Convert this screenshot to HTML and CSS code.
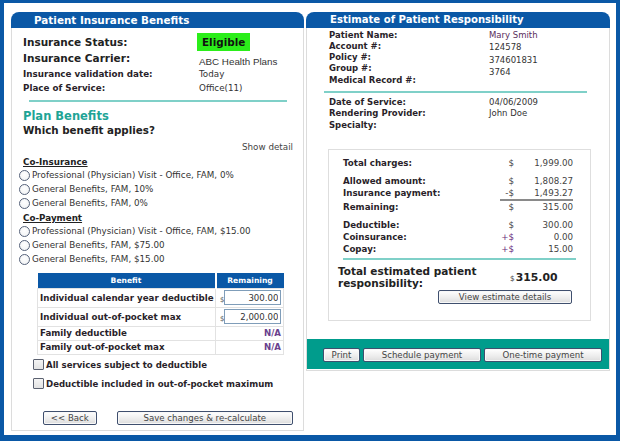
FILE: index.html
```html
<!DOCTYPE html>
<html>
<head>
<meta charset="utf-8">
<title>Patient Insurance Benefits</title>
<link rel="stylesheet" href="styles.css">
</head>
<body>
<div class="frame">
  <section class="panel panel-left">
    <div class="panel-head">Patient Insurance Benefits</div>
    <div class="panel-body left-body">
      <div class="info-row row-status"><span class="big-label">Insurance Status:</span><span class="eligible">Eligible</span></div>
      <div class="info-row row-carrier"><span class="big-label">Insurance Carrier:</span><span class="carrier">ABC Health Plans</span></div>
      <div class="info-row row-small"><span class="small-label">Insurance validation date:</span><span class="small-val">Today</span></div>
      <div class="info-row row-small"><span class="small-label">Place of Service:</span><span class="small-val">Office(11)</span></div>
      <div class="teal-rule left-rule"></div>
      <h2 class="plan-title">Plan Benefits</h2>
      <div class="which">Which benefit applies?</div>
      <div class="show-detail">Show detail</div>
      <div class="group-title">Co-Insurance</div>
      <label class="opt"><input type="radio" name="benefit" class="radio"><span>Professional (Physician) Visit - Office, FAM, 0%</span></label>
      <label class="opt"><input type="radio" name="benefit" class="radio"><span>General Benefits, FAM, 10%</span></label>
      <label class="opt"><input type="radio" name="benefit" class="radio"><span>General Benefits, FAM, 0%</span></label>
      <div class="group-title group-gap">Co-Payment</div>
      <label class="opt"><input type="radio" name="benefit" class="radio"><span>Professional (Physician) Visit - Office, FAM, $15.00</span></label>
      <label class="opt"><input type="radio" name="benefit" class="radio"><span>General Benefits, FAM, $75.00</span></label>
      <label class="opt"><input type="radio" name="benefit" class="radio"><span>General Benefits, FAM, $15.00</span></label>
      <table class="benefit-table">
        <thead>
          <tr><th class="col-benefit">Benefit</th><th class="col-remaining">Remaining</th></tr>
        </thead>
        <tbody>
          <tr class="tall-row"><td class="b-name">Individual calendar year deductible</td><td class="b-val"><span class="dollar">$</span><input class="amount-input" type="text" value="300.00"></td></tr>
          <tr class="tall-row"><td class="b-name">Individual out-of-pocket max</td><td class="b-val"><span class="dollar">$</span><input class="amount-input" type="text" value="2,000.00"></td></tr>
          <tr class="short-row"><td class="b-name">Family deductible</td><td class="b-na">N/A</td></tr>
          <tr class="short-row"><td class="b-name">Family out-of-pocket max</td><td class="b-na">N/A</td></tr>
        </tbody>
      </table>
      <label class="check check-first"><input type="checkbox" class="cb"><span>All services subject to deductible</span></label>
      <label class="check check-second"><input type="checkbox" class="cb"><span>Deductible included in out-of-pocket maximum</span></label>
      <div class="left-actions">
        <button class="btn btn-back">&lt;&lt; Back</button>
        <button class="btn btn-save">Save changes &amp; re-calculate</button>
      </div>
    </div>
  </section>

  <section class="panel panel-right">
    <div class="panel-head head-right">Estimate of Patient Responsibility</div>
    <div class="panel-body right-body">
      <div class="pair pair-top">
        <div class="pair-labels">
          <div>Patient Name:</div>
          <div>Account #:</div>
          <div>Policy #:</div>
          <div>Group #:</div>
          <div>Medical Record #:</div>
        </div>
        <div class="pair-values">
          <div class="name-val">Mary Smith</div>
          <div>124578</div>
          <div>374601831</div>
          <div>3764</div>
        </div>
      </div>
      <div class="teal-rule right-rule"></div>
      <div class="pair pair-service">
        <div class="pair-labels">
          <div>Date of Service:</div>
          <div>Rendering Provider:</div>
          <div>Specialty:</div>
        </div>
        <div class="pair-values">
          <div>04/06/2009</div>
          <div>John Doe</div>
        </div>
      </div>

      <div class="summary">
        <div class="sum-grid">
          <div class="s-label">Total charges:</div><div class="s-sign">$</div><div class="s-amt">1,999.00</div>
        </div>
        <div class="sum-grid sum-gap">
          <div class="s-label">Allowed amount:</div><div class="s-sign">$</div><div class="s-amt">1,808.27</div>
          <div class="s-label">Insurance payment:</div><div class="s-sign underline">-$</div><div class="s-amt underline">1,493.27</div>
          <div class="s-label">Remaining:</div><div class="s-sign">$</div><div class="s-amt">315.00</div>
        </div>
        <div class="sum-grid sum-gap">
          <div class="s-label">Deductible:</div><div class="s-sign">$</div><div class="s-amt">300.00</div>
          <div class="s-label">Coinsurance:</div><div class="s-sign plus">+$</div><div class="s-amt">0.00</div>
          <div class="s-label">Copay:</div><div class="s-sign plus">+$</div><div class="s-amt">15.00</div>
        </div>
        <div class="teal-rule sum-rule"></div>
        <div class="total-row">
          <div class="total-label">Total estimated patient<br>responsibility:</div>
          <div class="total-val"><span class="total-dollar">$</span>315.00</div>
        </div>
        <div class="view-row"><button class="btn btn-view">View estimate details</button></div>
      </div>

      <div class="footer-bar">
        <button class="btn btn-print">Print</button>
        <button class="btn btn-pay">Schedule payment</button>
        <button class="btn btn-pay">One-time payment</button>
      </div>
    </div>
  </section>
</div>
</body>
</html>
```

FILE: styles.css
```css
* { box-sizing: border-box; }
html, body { margin: 0; padding: 0; background: #ffffff; }
body {
  width: 620px;
  height: 441px;
  font-family: "DejaVu Sans", Verdana, sans-serif;
  font-size: 8.75px;
  color: #333;
}
.frame {
  width: 620px;
  height: 441px;
  border-style: solid;
  border-color: #0a58a6;
  border-width: 3px 4px 6px 4px;
  padding: 9px 0 0 7px;
  display: flex;
  align-items: flex-start;
  gap: 2px;
  background: #fff;
}
.panel { display: flex; flex-direction: column; }
.panel-left { width: 293px; height: 419px; }
.panel-right { width: 304px; height: 359px; }
.panel-head {
  height: 16px;
  background: #0a58a6;
  color: #fff;
  font-weight: bold;
  font-size: 10.4px;
  line-height: 16px;
  padding-left: 23px;
  border-radius: 8px 8px 0 0;
  white-space: nowrap;
}
.head-right { padding-left: 24px; font-size: 10.1px; }
.panel-body {
  flex: 1;
  border: 1px solid #dcdcdc;
  border-top: none;
  display: flex;
  flex-direction: column;
}

/* Left panel */
.left-body { padding: 5px 10px 0 11px; }
.info-row { display: flex; white-space: nowrap; }
.info-row > :first-child { width: 174px; flex: none; }
.big-label { font-size: 10.5px; font-weight: bold; color: #222; line-height: 14px; }
.small-label { font-size: 8.75px; font-weight: bold; color: #2a1f2a; line-height: 14px; }
.small-val { font-size: 8.75px; color: #333; line-height: 14px; padding-left: 2px; }
.row-status { height: 18px; align-items: center; }
.eligible {
  background: #2bee1a;
  font-size: 10.4px;
  font-weight: bold;
  color: #111;
  height: 18px;
  line-height: 18px;
  padding: 0 5px;
}
.row-carrier { height: 16px; align-items: flex-start; }
.carrier {
  font-family: "Liberation Sans", Arial, sans-serif;
  font-size: 9.8px;
  color: #333;
  line-height: 14px;
  margin-top: 4px;
  padding-left: 2px;
}
.row-small { height: 14px; align-items: center; }
.teal-rule { height: 2px; background: #7fd0c8; flex: none; }
.left-rule { margin: 5px 6px 0 6px; }
.plan-title {
  margin: 7px 0 0 0;
  font-size: 11.5px;
  line-height: 14px;
  color: #1ea496;
  font-weight: bold;
}
.which { font-size: 10.3px; font-weight: bold; color: #222; line-height: 14px; }
.show-detail { margin-top: 3px; text-align: right; color: #444; line-height: 14px; }
.group-title {
  margin-top: 2px;
  font-weight: bold;
  text-decoration: underline;
  color: #222;
  line-height: 12px;
}
.opt {
  display: flex;
  align-items: center;
  height: 14px;
  margin-left: -4px;
  white-space: nowrap;
  color: #333;
}
.radio {
  appearance: none;
  -webkit-appearance: none;
  width: 11px;
  height: 11px;
  margin: 0 2px 0 0;
  border: 1px solid #56627a;
  border-radius: 50%;
  background: radial-gradient(circle at 50% 40%, #ffffff 0%, #eef0f2 100%);
  flex: none;
}
.benefit-table {
  margin: 7px 0 0 14px;
  width: 247px;
  border-collapse: collapse;
  table-layout: fixed;
}
.benefit-table th {
  background: #0a58a6;
  color: #fff;
  font-size: 7.6px;
  font-weight: bold;
  height: 15px;
  padding: 0;
  text-align: center;
}
.col-benefit { width: 178px; border-right: 2px solid #fff; }
.benefit-table td { border: 1px solid #e2e2e2; padding: 0; }
.tall-row td { height: 19px; }
.short-row td { height: 14px; }
.b-name { font-weight: bold; color: #2a1f2a; padding-left: 2px !important; white-space: nowrap; font-size: 8.7px; }
.b-val { white-space: nowrap; padding-left: 4px !important; }
.dollar { font-size: 7px; color: #555; vertical-align: -2px; }
.amount-input {
  width: 57px;
  height: 15px;
  border: 1px solid #7f9db9;
  font-family: "DejaVu Sans", Verdana, sans-serif;
  font-size: 8.6px;
  color: #333;
  text-align: right;
  padding: 0 2px;
  margin: 0;
  vertical-align: middle;
  background: #fff;
}
.b-na { text-align: right; color: #6a3f8e; font-weight: bold; padding-right: 2px !important; font-size: 8.6px; }
.check {
  display: flex;
  align-items: center;
  height: 14px;
  margin-left: 10px;
  font-size: 8.6px;
  font-weight: bold;
  color: #2a1f2a;
  white-space: nowrap;
}
.check-first { margin-top: 3px; }
.check-second { margin-top: 5px; }
.cb {
  appearance: none;
  -webkit-appearance: none;
  width: 11px;
  height: 11px;
  margin: 0 2px 0 0;
  border: 1px solid #5b6170;
  border-radius: 1px;
  background: linear-gradient(#f4f4f4, #e2e2e2);
  flex: none;
}
.left-actions { display: flex; gap: 20px; margin: 20px 0 0 20px; }
.btn {
  height: 14px;
  padding: 0;
  font-family: "DejaVu Sans", Verdana, sans-serif;
  font-size: 8.6px;
  line-height: 12px;
  color: #444;
  background: linear-gradient(#ffffff, #ececec 60%, #dcdcdc);
  border: 1px solid #3f4f6e;
  border-radius: 2px;
  box-shadow: inset 0 0 0 1px #f8f8f8;
  white-space: nowrap;
}
.btn-back { width: 55px; }
.btn-save { width: 181px; }

/* Right panel */
.right-body { padding: 1px 0 0 0; }
.pair { display: flex; padding-left: 22px; }
.pair-labels { width: 160px; flex: none; font-weight: bold; color: #2a1f2a; font-size: 8.5px; }
.pair-values { color: #333; font-size: 8.5px; }
.pair-top .pair-labels { line-height: 11.25px; padding-top: 0.5px; }
.pair-top .pair-values { line-height: 12.3px; }
.name-val { color: #5a2e5c; }
.right-rule { margin: 5px 22px 0 17px; }
.pair-service { margin-top: 4px; }
.pair-service .pair-labels, .pair-service .pair-values { line-height: 11.5px; }
.summary {
  margin: 18px 0 0 21px;
  width: 263px;
  border: 1px solid #dedede;
  padding: 7px 0 16px 14px;
}
.sum-grid {
  display: grid;
  grid-template-columns: 157px 15px 58px;
  line-height: 12px;
  font-size: 8.7px;
}
.sum-gap { margin-top: 6px; }
.s-label { font-weight: bold; color: #2a1f2a; }
.s-sign { text-align: right; padding-right: 1px; color: #444; }
.s-amt { text-align: right; color: #444; }
.underline { border-bottom: 2px solid #8a8a8a; }
.plus { color: #6a2e7a; }
.sum-rule { margin: 3px 4px 0 0; width: 233px; }
.total-row { display: flex; align-items: center; margin: 6px 0 0 -5px; }
.total-label { width: 172px; font-size: 10.5px; font-weight: bold; color: #222; line-height: 11.5px; white-space: nowrap; }
.total-val { font-size: 10.8px; font-weight: bold; color: #222; }
.total-dollar { font-size: 7.5px; font-weight: normal; color: #444; margin-right: 1px; }
.view-row { margin: 1px 0 0 95px; }
.btn-view { width: 134px; }
.footer-bar {
  margin-top: 18px;
  height: 30px;
  background: #009c8c;
  display: flex;
  gap: 3px;
  padding: 9px 0 0 16px;
}
.btn-print { width: 37px; }
.btn-pay { width: 118px; }
```
